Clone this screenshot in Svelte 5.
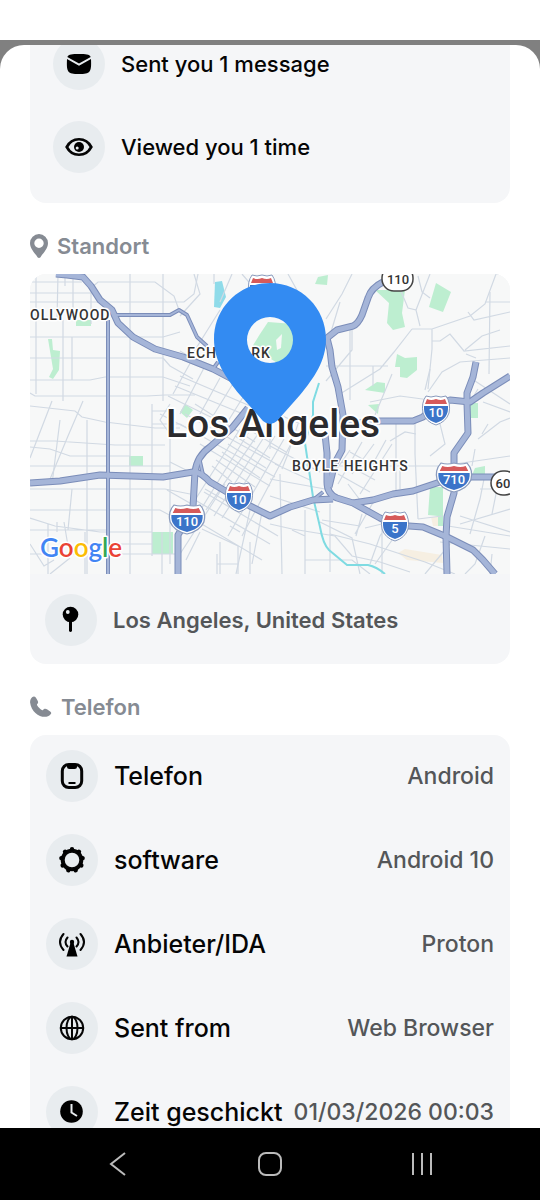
<!-- visitor details sheet: activity, location map and device info -->
<script>
	const activity = [
		{ icon: 'mail', label: 'Sent you 1 message' },
		{ icon: 'eye', label: 'Viewed you 1 time' }
	];

	const device = [
		{ icon: 'phone', label: 'Telefon', value: 'Android' },
		{ icon: 'gear', label: 'software', value: 'Android 10' },
		{ icon: 'antenna', label: 'Anbieter/IDA', value: 'Proton' },
		{ icon: 'globe', label: 'Sent from', value: 'Web Browser' },
		{ icon: 'clock', label: 'Zeit geschickt', value: '01/03/2026 00:03' }
	];

	// gear outline, nine rounded teeth
	const teeth = Array.from({ length: 9 }, (_, i) => i * 40);

	const parks = [
		'M18 65h4l1 11 7 1-1 19-6 9-4-2 4-8z',
		'M46 46h15v6H46z',
		'M155 130l8 6-6 8-7-6z',
		'M99 182h14v10H99z',
		'M122 258h21v22h-21z',
		'M288 3l10-2-1 10-12-1z',
		'M345 16h30l-3 23 3 14-12 3-6-7 2-20z',
		'M406 9l15 9-8 20-14-5z',
		'M367 80l8 4 12-1v13l-10 8-7-1V93h-5z',
		'M335 116l12-8 8 1v10z',
		'M338 131l11-1-1 10z',
		'M440 129h8v15h-8z',
		'M445 194l10-2v9h-13z',
		'M400 213h13v39h-5v-10l-10-1z',
		'M222 73l8-13 8-12 26 2 4 32-16 10z'
	];

	const streets = [
		// hollywood and mid-city grid
		'M6 0V120M28 0L27 46M35 0V12M43 4V46M61 12V50M100 0V300M133 0V127M33 46V127M42 63V106',
		'M0 8H52M0 19H62M0 28H154L164 20 168 0M60 15L68 8H125L144 22 149 36M0 63H133L150 58M0 84H133',
		'M0 106H60L75 103H133L160 112M0 119L5 122H117L135 121H165M122 130V282M122 137H140M122 150H150M140 146V290',
		'M0 132L45 137 52 143 75 148 125 154H150M22 127L0 184M53 127L38 162 18 210M0 167H25L85 171H135',
		'M0 173L20 175 40 182H100M0 192H140M0 215H135L160 220M0 236H130L145 244M57 146V300M30 146L22 210M42 215L38 256',
		'M0 244L25 252 70 258H122M0 256H78M18 250V300M27 248V258M34 248L38 272M78 270H122M0 280H145M0 270L14 292 24 286',
		'M55 258V300M132 258V300M20 300L40 284',
		// silver lake and echo park
		'M164 0L170 20 150 42M190 36L160 84M202 0L190 28M184 10V0M212 0L224 14M133 84L140 92 163 105M163 84L143 120M150 77L175 92',
		'M175 92L150 140M190 104L160 158M204 108L178 150M215 120L190 160M138 122L205 155M145 112L218 142M150 102L225 134M130 140L168 160',
		// downtown, turned grid
		'M165 130L225 168M155 140L250 192M150 150L245 203M170 170L240 212M140 130L130 146 140 160',
		'M210 155L165 226M220 156L168 240M228 160L176 236M236 160L184 242M245 162L192 244M254 165L198 262M262 168L212 262',
		'M205 162L240 184M198 170L236 194M192 178L230 204M186 186L225 213M213 152L256 178M182 192L202 208',
		'M140 188L160 198M137 216L165 232M175 215L205 232M165 226L240 270M174 218L248 262M160 243L232 286M172 255L208 272V300',
		'M150 280L195 210M156 286L170 258M232 238L222 290M220 236L206 300M187 290H209M187 280V300M190 268V300M200 252L210 258M220 268V300M240 160V175',
		// arts district and boyle heights
		'M248 140L275 152M240 172L290 198M245 190L280 206M250 200L252 300M268 150L258 180 252 195M240 205L295 215M240 222L290 238',
		'M240 250L262 255 305 262 322 282 350 288 380 298M262 256L275 262M275 236V300M275 286H322L340 300M292 246L330 252M300 230V298',
		'M320 176L300 205M332 168L308 210M344 170L322 200M356 166L340 195M362 170L330 220M320 178L352 196M312 188L345 206M308 200L340 218',
		'M318 210L330 226M290 248L322 264 330 300M332 240L326 262M345 225L325 260M335 254L360 248M360 167L375 158 386 160M366 150V220',
		'M385 146V180L388 245M310 192H395M390 192H420M410 150L415 170 400 182M370 195V215M352 255V300M360 246L350 262 340 290',
		// north and east
		'M258 0L268 18 280 45M296 45L312 20 322 0M310 28L298 68M322 52V76L296 107M296 92H358M320 55V126M343 92V112M310 120L350 95 364 78 382 55',
		'M382 55H402L440 42 455 30 466 0M368 10L378 34 386 36 390 52M386 36L400 0M388 2L392 18 400 24M402 55V75L398 115M340 128L370 122 400 126',
		'M345 141L362 100M402 67H410L420 60 434 77 480 72M398 118L412 98 430 88 480 84M466 0H480M460 18L459 100M435 76L452 62 470 56M438 38L444 46 480 38',
		'M455 28H480M400 95L395 116M442 105L480 130M448 115L440 128M453 128L480 138M436 80L446 84M448 165L470 148 480 144M445 175L442 192M458 150L452 160',
		'M425 190L480 182M455 200L450 225 440 260M470 200L462 240M450 215H480M480 235L430 250M430 242L480 258M418 252L480 262',
		'M420 270L395 300M455 262L445 290 435 300M410 268L480 275M462 280L460 300M365 262L345 290M388 245L412 242M300 260L340 270 395 288 425 300'
	];

	const freeways = [
		{ d: 'M83 41H140L149 36 157 41 167 63 177 72M188 88L183 95M293 218L283 226M169 183L173 201', wide: false },
		{ d: 'M78 46V300', wide: false },
		{ d: 'M26 0L37 1 53 3 61 12 70 26 82 36 88 49 103 63 125 75 153 83 183 95 204 106', wide: true },
		{ d: 'M218 134L202 154 180 173Q167 182 165 198L163 233 157 246 148 261V300', wide: true },
		{ d: 'M0 209L30 207 70 201 133 203 163 198Q170 197 180 208L197 218 220 232 240 242 260 233 283 226 303 225', wide: true },
		{ d: 'M295 160L297 179V208Q297 220 307 224L323 229 350 244 365 251 393 253 417 263 443 276 453 286 465 300', wide: true },
		{ d: 'M299 213L305 189 312 176 313 141 308 113 302 93 300 76 297 64 307 56 323 52Q328 50 332 41L338 24Q341 14 353 8', wide: true },
		{ d: 'M323 229L343 226 363 220 383 217 407 209 424 203H470', wide: true },
		{ d: 'M315 150L350 147H383L393 143 406 130 420 126 440 128 453 119 480 102', wide: true },
		{ d: 'M446 88L443 103 437 119V129L438 159 424 179V219L417 243 416 263 417 300', wide: true }
	];

	const shields = [
		{ x: 232, y: 15, road: '5' },
		{ x: 406, y: 136, road: '10' },
		{ x: 209, y: 223, road: '10' },
		{ x: 157, y: 245, road: '110' },
		{ x: 424, y: 203, road: '710' },
		{ x: 365, y: 252, road: '5' }
	];

	const google = [
		['G', '#4285f4'],
		['o', '#ea4335'],
		['o', '#fbbc05'],
		['g', '#4285f4'],
		['l', '#34a853'],
		['e', '#ea4335']
	];
</script>

{#snippet icon(name)}
	<span class="badge">
		<svg viewBox="0 0 28 28" width="28" height="28" aria-hidden="true">
			{#if name === 'mail'}
				<path d="M2.300 7C3.800 4 7 4 14 4s10.200 0 11.700 3L14 13.600z" />
				<path d="M2 8.900l12 6.800 12-6.800c.6 13-.5 15.100-12 15.100S1.400 21.900 2 8.900z" />
			{:else if name === 'eye'}
				<path class="line heavy" d="M1.800 14C7 2.500 21 2.500 26.200 14 21 25.500 7 25.500 1.800 14z" transform="translate(0 1.400) scale(1 .9)" />
				<circle cx="14" cy="14" r="5" />
				<circle cx="12.200" cy="15" r="1.500" fill="#e8ecef" />
			{:else if name === 'phone'}
				<rect class="line heavy" x="4.300" y="2.500" width="19.400" height="23" rx="6.500" />
				<path d="M9 2h10v2.500q0 2.500-2.500 2.500h-5Q9 7 9 4.500zM10.500 20h7v2h-7z" />
			{:else if name === 'gear'}
				<circle class="line ring" cx="14" cy="14" r="9.300" />
				{#each teeth as angle}
					<circle cx="14" cy="3.200" r="2.200" transform="rotate({angle} 14 14)" />
				{/each}
			{:else if name === 'antenna'}
				<circle cx="14" cy="12" r="2.200" />
				<path d="M12.500 13h3l4 13.500h-11z" />
				<path class="line" d="M9.500 7.500q-4 4.500 0 9M18.500 7.500q4 4.500 0 9M5.500 4q-7 8 0 16M22.500 4q7 8 0 16" />
			{:else if name === 'globe'}
				<circle class="line" cx="14" cy="14" r="11.200" />
				<ellipse class="line" cx="14" cy="14" rx="5.500" ry="11.200" />
				<path class="line" d="M2.800 14h22.400M14 2.800v22.400" />
			{:else if name === 'clock'}
				<circle cx="13.500" cy="13.500" r="11.300" />
				<path d="M13.500 6v8.500l5.500 3.500" fill="none" stroke="#e8ecef" stroke-width="2" />
			{:else if name === 'pushpin'}
				<circle cx="13.500" cy="8.500" r="7.800" />
				<path d="M12 15h3v10q-1.500 2-3 0z" />
				<circle cx="10.800" cy="6" r="1.900" fill="#e8ecef" />
			{/if}
		</svg>
	</span>
{/snippet}

<div class="screen">
	<div class="status-bar"></div>

	<main class="backdrop">
		<div class="sheet">
			<ul class="card activity">
				{#each activity as item}
					<li class="row">
						{@render icon(item.icon)}
						<span class="action">{item.label}</span>
					</li>
				{/each}
			</ul>

			<h2>
				<svg viewBox="0 0 18 24" width="18" height="24" aria-hidden="true">
					<path fill-rule="evenodd" d="M9 0a9 9 0 0 1 9 9c0 6-5 10-7.500 14.200q-1.500 1.600-3 0C5 19 0 15 0 9a9 9 0 0 1 9-9zm0 4.500a4.700 4.700 0 1 0 0 9.400 4.700 4.700 0 0 0 0-9.400z" />
				</svg>
				Standort
			</h2>
			<section class="card">
				<svg class="map" viewBox="0 0 480 300" preserveAspectRatio="xMidYMid slice" role="img" aria-label="Los Angeles">
					<rect width="480" height="300" fill="#f7f8f8" />
					{#each parks as d}
						<path {d} fill="#bdeed0" />
					{/each}
					<path d="M401 243h7v9h-5zM375 275l37 6 1 8-36-3-9-7z" fill="#f6efe2" />
					<path d="M185 8l7-1 4 16-6 11-6-1z" fill="#8fdbe9" />
					<path d="M246 66l6-6-1 14-4 2z" fill="#f7f8f8" />
					{#each streets as d}
						<path class="street" {d} />
					{/each}
					<path class="river" d="M289 109L283 128V141L275 169 283 223 290 253Q293 270 299 276L317 291H338Q347 293 355 300" />
					{#each freeways as road}
						<path class="freeway-edge" class:wide={road.wide} d={road.d} />
					{/each}
					{#each freeways as road}
						<path class="freeway" class:wide={road.wide} d={road.d} />
					{/each}

					{#each shields as { x, y, road }}
						<g transform="translate({x} {y})">
							<g transform="scale({road.length > 2 ? 1.3 : 1} 1)">
								<path class="shield-rim" d="M-10-14Q-5-12 0-14 5-12 10-14 15-7 13 3 10 12 0 15-10 12-13 3-15-7-10-14z" />
								<path d="M-9-11Q-5-9 0-11 5-9 9-11L11-6H-11z" fill="#d65a5a" />
								<path d="M-12-4H12Q13 9 0 13-13 9-12-4z" fill="#3b74c9" />
							</g>
							<text class="road" y="7">{road}</text>
						</g>
					{/each}
					<rect class="route" x="352" y="-8" width="31" height="25" rx="12" />
					<text class="road dark" x="368" y="10">110</text>
					<rect class="route" x="461" y="197" width="26" height="24" rx="12" />
					<text class="road dark" x="473" y="214">60</text>

					<text class="place" x="0" y="46">OLLYWOOD</text>
					<text class="place" x="157" y="84">ECHO PARK</text>
					<text class="place" x="262" y="197">BOYLE HEIGHTS</text>
					<text class="city" x="136" y="163">Los Angeles</text>
					<text class="google" x="10" y="283">{#each google as [letter, color]}<tspan fill={color}>{letter}</tspan>{/each}</text>

					<path
						fill="#338bf2"
						fill-rule="evenodd"
						d="M240 9c31 0 56 25 56 56 0 21-11 38-26 56l-23 26q-7 6-14 0l-23-26c-15-18-26-35-26-56 0-31 25-56 56-56zm0 34a23 23 0 1 0 0 46 23 23 0 0 0 0-46z"
					/>
				</svg>
				<div class="row place-row">
					{@render icon('pushpin')}
					<span class="address">Los Angeles, United States</span>
				</div>
			</section>

			<h2>
				<svg viewBox="0 0 24 24" width="22" height="24" aria-hidden="true">
					<path d="M1 3C3 0 5 0 6.500 2l2 3.500q1 2-.8 3.500c-1 1 4.500 7 6.300 6.500 1.500-2 3-2 4.500-1l3.500 2.300q2 1.400.5 3.200c-6 7-21 0-22.400-13Q0 4.500 1 3z" />
				</svg>
				Telefon
			</h2>
			<dl class="card device">
				{#each device as item}
					<div class="row">
						{@render icon(item.icon)}
						<dt>{item.label}</dt>
						<dd>{item.value}</dd>
					</div>
				{/each}
			</dl>
		</div>
	</main>

	<nav>
		<button aria-label="Back">
			<svg viewBox="0 0 26 26" width="26" height="26"><path d="M20 2L6 13l14 11" /></svg>
		</button>
		<button aria-label="Home">
			<svg viewBox="0 0 26 26" width="26" height="26"><rect x="2" y="2" width="22" height="22" rx="7" /></svg>
		</button>
		<button aria-label="Recent apps">
			<svg viewBox="0 0 26 26" width="26" height="26"><path d="M4 2v22M13 2v22M22 2v22" /></svg>
		</button>
	</nav>
</div>

<style>
	:global(body) {
		margin: 0;
		background: #fff;
	}
	.screen {
		display: flex;
		flex-direction: column;
		height: 100vh;
		overflow: hidden;
		font-family: Inter, 'Liberation Sans', sans-serif;
		font-weight: 500;
		color: #050505;
	}
	.status-bar {
		flex: none;
		height: 40px;
		background: #fff;
	}
	.backdrop {
		flex: 1;
		min-height: 0;
		padding-top: 5px;
		background: #808080;
		display: flex;
	}
	.sheet {
		flex: 1;
		padding: 0 30px;
		background: #fff;
		border-radius: 24px 24px 0 0;
		overflow: hidden;
	}
	.card {
		margin: 0;
		padding: 0;
		list-style: none;
		background: #f5f6f8;
		border-radius: 16px;
		overflow: hidden;
	}
	/* the sheet is scrolled a little past the top of this card */
	.activity {
		display: grid;
		gap: 31px;
		margin-top: -37px;
		padding: 30px 23px;
	}
	.row {
		display: flex;
		align-items: center;
		gap: 16px;
	}
	.badge {
		flex: none;
		display: flex;
		align-items: center;
		justify-content: center;
		width: 52px;
		height: 52px;
		border-radius: 50%;
		background: #e8ecef;
	}
	.line {
		fill: none;
		stroke: #050505;
		stroke-width: 2;
		stroke-linecap: round;
	}
	.heavy {
		stroke-width: 3;
	}
	.ring {
		stroke-width: 4;
	}
	.action {
		font-size: 22px;
		line-height: 30px;
	}
	h2 {
		display: flex;
		align-items: center;
		gap: 9px;
		margin: 0;
		padding: 29px 0 14px;
		font-size: 22px;
		line-height: 28px;
		font-weight: 600;
		color: #868b93;
	}
	h2 svg {
		fill: #868b93;
	}
	.map {
		display: block;
		width: 100%;
		height: 300px;
		font-family: Roboto, sans-serif;
		font-weight: 500;
	}
	.place-row {
		padding: 20px 15px 18px;
	}
	.address {
		font-size: 22px;
		font-weight: 600;
		color: #545659;
	}
	.device {
		display: grid;
		gap: 32px;
		padding: 15px 16px;
	}
	.device .row {
		gap: 10px;
	}
	dt {
		flex: none;
		padding-left: 6px;
		font-size: 25px;
		line-height: 30px;
		white-space: nowrap;
	}
	dd {
		flex: 1;
		margin: 0;
		font-size: 23px;
		line-height: 30px;
		text-align: right;
		white-space: nowrap;
		color: #545659;
	}

	.street {
		fill: none;
		stroke: #d1d9e3;
		stroke-width: 1.2;
	}
	.river {
		fill: none;
		stroke: #7fdbe2;
		stroke-width: 2;
	}
	.freeway,
	.freeway-edge {
		fill: none;
		stroke-linejoin: round;
	}
	.freeway-edge {
		stroke: #7b8db9;
		stroke-width: 4;
	}
	.freeway-edge.wide {
		stroke-width: 7;
	}
	.freeway {
		stroke: #a5b5d8;
		stroke-width: 2;
	}
	.freeway.wide {
		stroke-width: 5;
	}
	.shield-rim {
		fill: #fff;
		stroke: #8a9bbd;
		stroke-width: 1;
	}
	.route {
		fill: #fff;
		stroke: #444;
		stroke-width: 1.5;
	}
	.road {
		font-size: 13px;
		text-anchor: middle;
		fill: #fff;
	}
	.road.dark {
		fill: #333;
	}
	.place,
	.city,
	.google {
		stroke: #fff;
		stroke-linejoin: round;
		paint-order: stroke;
	}
	.place {
		font-size: 14px;
		letter-spacing: 1px;
		fill: #333;
		stroke-width: 3;
	}
	.city {
		font-size: 39px;
		fill: #2b2b2e;
		stroke-width: 4;
	}
	.google {
		font-family: Lato, sans-serif;
		font-size: 26px;
		font-weight: 600;
		stroke-width: 3;
	}

	nav {
		flex: none;
		display: flex;
		justify-content: space-around;
		align-items: center;
		height: 72px;
		padding: 0 42px;
		background: #000;
	}
	button {
		display: flex;
		padding: 8px;
		border: 0;
		background: none;
	}
	button svg {
		fill: none;
		stroke: #bbb;
		stroke-width: 2;
	}
</style>
